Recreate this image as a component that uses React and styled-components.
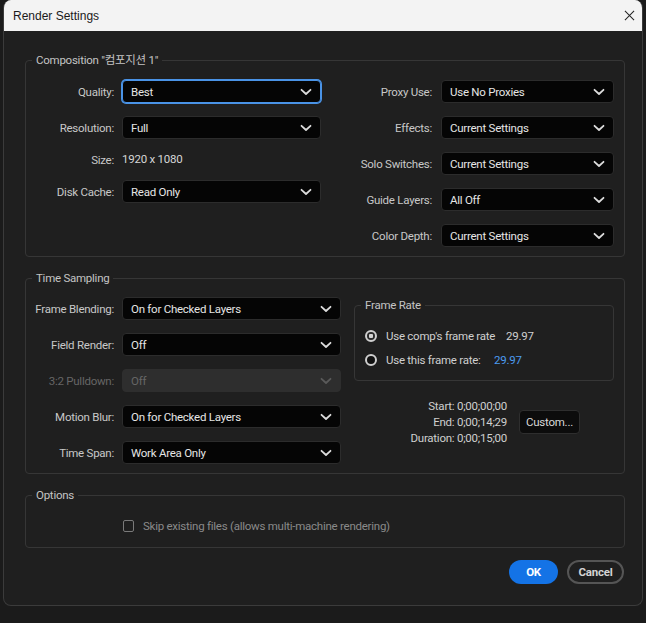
import styled, { createGlobalStyle } from "styled-components";

const GlobalStyle = createGlobalStyle`
    html, body {
        margin: 0;
        padding: 0;
        background: #1b1b1b;
    }
    * { box-sizing: border-box; }
`;

const FONT = `"Roboto", "Noto Sans CJK KR", sans-serif`;

function Chevron({ disabled }) {
    return (
        <ChevronSvg viewBox="0 0 12 8" $disabled={disabled}>
            <path d="M1.5 1.8 L6 6 L10.5 1.8" />
        </ChevronSvg>
    );
}

function Select({ value, width, focused, disabled }) {
    return (
        <SelectBox $width={width} $focused={focused} $disabled={disabled}>
            <span>{value}</span>
            <Chevron disabled={disabled} />
        </SelectBox>
    );
}

export default function App() {
    return (
        <>
            <GlobalStyle />
            <Window>
                <TitleBar>
                    <Title>Render Settings</Title>
                    <CloseBtn viewBox="0 0 12 12">
                        <path d="M1 1 L11 11 M11 1 L1 11" />
                    </CloseBtn>
                </TitleBar>
                <Body>
                    <Group>
                        <Legend>Composition "컴포지션 1"</Legend>
                        <Columns>
                            <FormGrid $label={88} $gap={8}>
                                <Label>Quality:</Label>
                                <Select value="Best" width={199} focused />
                                <Label>Resolution:</Label>
                                <Select value="Full" width={199} />
                                <Label>Size:</Label>
                                <Plain>1920 x 1080</Plain>
                                <Label>Disk Cache:</Label>
                                <Select value="Read Only" width={199} />
                            </FormGrid>
                            <FormGrid $label={111} $gap={9}>
                                <Label>Proxy Use:</Label>
                                <Select value="Use No Proxies" width={173} />
                                <Label>Effects:</Label>
                                <Select value="Current Settings" width={173} />
                                <Label>Solo Switches:</Label>
                                <Select value="Current Settings" width={173} />
                                <Label>Guide Layers:</Label>
                                <Select value="All Off" width={173} />
                                <Label>Color Depth:</Label>
                                <Select value="Current Settings" width={173} />
                            </FormGrid>
                        </Columns>
                    </Group>

                    <Group $tight>
                        <Legend>Time Sampling</Legend>
                        <Columns $gap={13}>
                            <FormGrid $label={88} $gap={8}>
                                <Label>Frame Blending:</Label>
                                <Select value="On for Checked Layers" width={219} />
                                <Label>Field Render:</Label>
                                <Select value="Off" width={219} />
                                <Label $disabled>3:2 Pulldown:</Label>
                                <Select value="Off" width={219} disabled />
                                <Label>Motion Blur:</Label>
                                <Select value="On for Checked Layers" width={219} />
                                <Label>Time Span:</Label>
                                <Select value="Work Area Only" width={219} />
                            </FormGrid>
                            <RightStack>
                                <SubGroup>
                                    <Legend>Frame Rate</Legend>
                                    <RadioRow>
                                        <Radio $checked />
                                        <RadioText $w={120}>Use comp's frame rate</RadioText>
                                        <Value>29.97</Value>
                                    </RadioRow>
                                    <RadioRow>
                                        <Radio />
                                        <RadioText $w={108}>Use this frame rate:</RadioText>
                                        <Value $blue>29.97</Value>
                                    </RadioRow>
                                </SubGroup>
                                <SpanRow>
                                    <Times>
                                        <div>Start: 0;00;00;00</div>
                                        <div>End: 0;00;14;29</div>
                                        <div>Duration: 0;00;15;00</div>
                                    </Times>
                                    <CustomBtn>Custom...</CustomBtn>
                                </SpanRow>
                            </RightStack>
                        </Columns>
                    </Group>

                    <Group $options>
                        <Legend>Options</Legend>
                        <CheckRow>
                            <CheckBox />
                            <CheckText>Skip existing files (allows multi-machine rendering)</CheckText>
                        </CheckRow>
                    </Group>

                    <Footer>
                        <PrimaryBtn>OK</PrimaryBtn>
                        <SecondaryBtn>Cancel</SecondaryBtn>
                    </Footer>
                </Body>
            </Window>
        </>
    );
}

const Window = styled.div`
    margin: 0 3px;
    width: 640px;
    height: 606px;
    background: #1f1f1f;
    border: 1px solid #3b3b3b;
    border-top: none;
    border-radius: 8px;
    overflow: hidden;
    font-family: ${FONT};
    font-size: 11.5px;
    letter-spacing: -0.25px;
`;

const TitleBar = styled.div`
    height: 31px;
    background: #f3f3f3;
    display: flex;
    align-items: center;
    justify-content: space-between;
    padding: 0 7px 0 9px;
    letter-spacing: 0;
`;

const Title = styled.div`
    font-family: "Liberation Sans", Arial, sans-serif;
    font-size: 12px;
    color: #1a1a1a;
`;

const CloseBtn = styled.svg`
    width: 11px;
    height: 11px;
    path {
        stroke: #222;
        stroke-width: 1.1;
        fill: none;
    }
`;

const Body = styled.div`
    padding: 21px 17px 0 21px;
`;

const Group = styled.fieldset`
    margin: ${({ $options }) => ($options ? "1px 0 12px 0" : "0 0 13px 0")};
    padding: ${({ $tight, $options }) =>
        $options ? "15px 0 13px 0" : $tight ? "11px 0 9px 0" : "12px 0 9px 0"};
    min-width: 0;
    border: 1px solid #363636;
    border-radius: 4px;
`;

const Legend = styled.legend`
    margin-left: 6px;
    padding: 0 4px;
    line-height: 16px;
    color: #c4c4c4;
`;

const Columns = styled.div`
    display: flex;
    align-items: flex-start;
    gap: ${({ $gap }) => $gap || 0}px;
`;

const FormGrid = styled.div`
    display: grid;
    grid-template-columns: ${({ $label }) => $label}px auto;
    column-gap: ${({ $gap }) => $gap}px;
    row-gap: 13px;
    align-items: center;
`;

const Label = styled.div`
    text-align: right;
    white-space: nowrap;
    color: ${({ $disabled }) => ($disabled ? "#666" : "#c8c8c8")};
`;

const Plain = styled.div`
    line-height: 15px;
    color: #d6d6d6;
`;

const SelectBox = styled.div`
    width: ${({ $width }) => $width}px;
    height: 23px;
    display: flex;
    align-items: center;
    justify-content: space-between;
    padding: 0 8px 0 8px;
    border-radius: 4px;
    background: ${({ $disabled }) => ($disabled ? "#2e2e2e" : "#050505")};
    color: ${({ $disabled }) => ($disabled ? "#666" : "#e6e6e6")};
    border: 1px solid ${({ $disabled }) => ($disabled ? "#2e2e2e" : "#2c2c2c")};
    box-shadow: ${({ $focused }) => ($focused ? "0 0 0 1px #4a93e6" : "none")};
    ${({ $focused }) => $focused && "border-color: #4a93e6;"}
`;

const ChevronSvg = styled.svg`
    width: 12px;
    height: 8px;
    path {
        fill: none;
        stroke: ${({ $disabled }) => ($disabled ? "#5a5a5a" : "#dcdcdc")};
        stroke-width: 1.8;
        stroke-linecap: round;
        stroke-linejoin: round;
    }
`;

const RightStack = styled.div`
    width: 260px;
    display: flex;
    flex-direction: column;
`;

const SubGroup = styled.fieldset`
    margin: 0;
    padding: 15px 0 12px 0;
    min-width: 0;
    border: 1px solid #363636;
    border-radius: 4px;
    display: flex;
    flex-direction: column;
    gap: 8px;
`;

const RadioRow = styled.div`
    display: flex;
    align-items: center;
    height: 16px;
    padding-left: 10px;
`;

const Radio = styled.span`
    flex: none;
    width: 12px;
    height: 12px;
    border-radius: 50%;
    border: 2px solid #cfcfcf;
    background: ${({ $checked }) =>
        $checked ? "radial-gradient(circle, #d4d4d4 0 2px, #2a2a2a 2.5px)" : "#111"};
    margin-right: 9px;
`;

const RadioText = styled.span`
    flex: none;
    color: #cfcfcf;
    width: ${({ $w }) => $w}px;
    white-space: nowrap;
`;

const Value = styled.span`
    color: ${({ $blue }) => ($blue ? "#4c9bf0" : "#cfcfcf")};
`;

const SpanRow = styled.div`
    display: flex;
    align-items: center;
    margin-top: 17px;
`;

const Times = styled.div`
    width: 153px;
    text-align: right;
    line-height: 16px;
    color: #cfcfcf;
`;

const CustomBtn = styled.div`
    margin-left: 12px;
    width: 61px;
    height: 24px;
    display: flex;
    align-items: center;
    justify-content: center;
    color: #d8d8d8;
    background: #0c0c0c;
    border: 1px solid #2e2e2e;
    border-radius: 4px;
`;

const CheckRow = styled.div`
    display: flex;
    align-items: center;
    height: 16px;
    padding-left: 97px;
`;

const CheckBox = styled.span`
    flex: none;
    width: 11px;
    height: 12px;
    border: 1.5px solid #7a7a7a;
    border-radius: 2px;
    margin-right: 9px;
`;

const CheckText = styled.span`
    color: #8a8a8a;
`;

const Footer = styled.div`
    display: flex;
    justify-content: flex-end;
    gap: 9px;
    padding-right: 1px;
`;

const PrimaryBtn = styled.div`
    width: 49px;
    height: 24px;
    border-radius: 12px;
    background: #1473e6;
    color: #fff;
    font-weight: 700;
    display: flex;
    align-items: center;
    justify-content: center;
`;

const SecondaryBtn = styled.div`
    width: 57px;
    height: 24px;
    border-radius: 12px;
    border: 2px solid #555;
    color: #d4d4d4;
    font-weight: 700;
    display: flex;
    align-items: center;
    justify-content: center;
`;
